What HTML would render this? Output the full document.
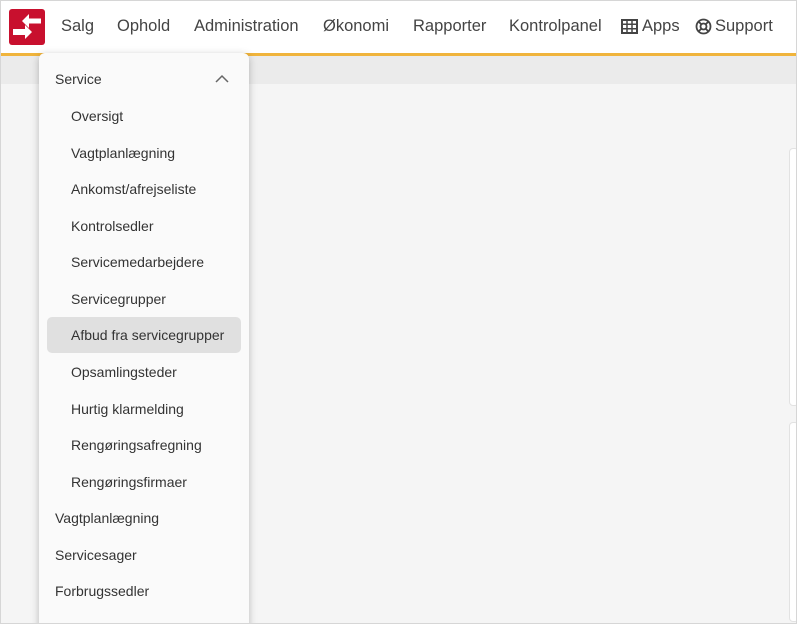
<!DOCTYPE html>
<html><head><meta charset="utf-8"><style>
*{margin:0;padding:0;box-sizing:border-box}
html,body{width:797px;height:624px;overflow:hidden}
body{font-family:"Liberation Sans",Roboto,sans-serif;background:#f5f5f5;position:relative}
.frame{position:absolute;left:0;top:0;width:797px;height:624px;border:1px solid #d6d6d6;z-index:10;pointer-events:none}
.hdr{position:absolute;left:0;top:0;width:797px;height:56px;background:#fff;border-bottom:3px solid #f0b43c}
.band{position:absolute;left:0;top:56px;width:797px;height:28px;background:#ebebeb}
.nav{position:absolute;top:17px;font-size:16.5px;color:#444;white-space:nowrap}
.logo{position:absolute;left:9px;top:9px;width:36px;height:36px}
.card{position:absolute;left:789px;width:10px;background:#fff;border:1px solid #e2e2e2;border-radius:4px}
.menu{position:absolute;left:39px;top:53px;width:210px;height:580px;background:#fafafa;border-radius:6px;box-shadow:0 2px 8px rgba(0,0,0,.25)}
.it{position:absolute;left:0;font-size:14px;color:#333;white-space:nowrap}
.hl{position:absolute;left:8px;top:264px;width:194px;height:36px;background:#e0e0e0;border-radius:5px}
</style></head><body>
<div class="hdr"></div>
<div class="band"></div>
<div class="card" style="top:148px;height:258px"></div>
<div class="card" style="top:422px;height:200px"></div>
<svg class="logo" viewBox="0 0 36 36"><rect width="36" height="36" rx="3" fill="#c8102e"/>
<polygon points="13,12 20,5 20,9.5 32,9.5 32,14.5 20,14.5 20,19" fill="#fff"/>
<polygon points="4,20 16,20 16,16 23,23 16,30 16,26 4,26" fill="#fff"/>
</svg>
<div class="nav" style="left:61px">Salg</div>
<div class="nav" style="left:117px">Ophold</div>
<div class="nav" style="left:194px">Administration</div>
<div class="nav" style="left:323px">Økonomi</div>
<div class="nav" style="left:413px">Rapporter</div>
<div class="nav" style="left:509px">Kontrolpanel</div>
<svg style="position:absolute;left:621px;top:19px" width="17" height="15" viewBox="0 0 17 15"><rect x="1" y="1" width="15" height="13" fill="none" stroke="#444" stroke-width="2"/><path d="M1 5.3H16M1 9.7H16M6 1V14M11 1V14" stroke="#444" stroke-width="1.5"/></svg>
<div class="nav" style="left:642px">Apps</div>
<svg style="position:absolute;left:695px;top:18px" width="17" height="17" viewBox="0 0 17 17"><circle cx="8.5" cy="8.5" r="7" fill="none" stroke="#444" stroke-width="1.8"/><circle cx="8.5" cy="8.5" r="3" fill="none" stroke="#444" stroke-width="1.8"/><path d="M3.5 3.5L6.4 6.4M13.5 3.5L10.6 6.4M3.5 13.5L6.4 10.6M13.5 13.5L10.6 10.6" stroke="#444" stroke-width="1.8"/></svg>
<div class="nav" style="left:715px">Support</div>
<div class="menu">
<div class="hl"></div>
<div class="it" style="left:16px;top:18px">Service</div>
<svg style="position:absolute;left:176px;top:21px" width="14" height="9" viewBox="0 0 14 9"><path d="M1 8L7 2L13 8" fill="none" stroke="#666" stroke-width="1.5"/></svg>
<div class="it" style="left:32px;top:55px">Oversigt</div>
<div class="it" style="left:32px;top:92px">Vagtplanlægning</div>
<div class="it" style="left:32px;top:128px">Ankomst/afrejseliste</div>
<div class="it" style="left:32px;top:165px">Kontrolsedler</div>
<div class="it" style="left:32px;top:201px">Servicemedarbejdere</div>
<div class="it" style="left:32px;top:238px">Servicegrupper</div>
<div class="it" style="left:32px;top:274px">Afbud fra servicegrupper</div>
<div class="it" style="left:32px;top:311px">Opsamlingsteder</div>
<div class="it" style="left:32px;top:348px">Hurtig klarmelding</div>
<div class="it" style="left:32px;top:384px">Rengøringsafregning</div>
<div class="it" style="left:32px;top:421px">Rengøringsfirmaer</div>
<div class="it" style="left:16px;top:457px">Vagtplanlægning</div>
<div class="it" style="left:16px;top:494px">Servicesager</div>
<div class="it" style="left:16px;top:530px">Forbrugssedler</div>
</div>
<div class="frame"></div>
</body></html>
